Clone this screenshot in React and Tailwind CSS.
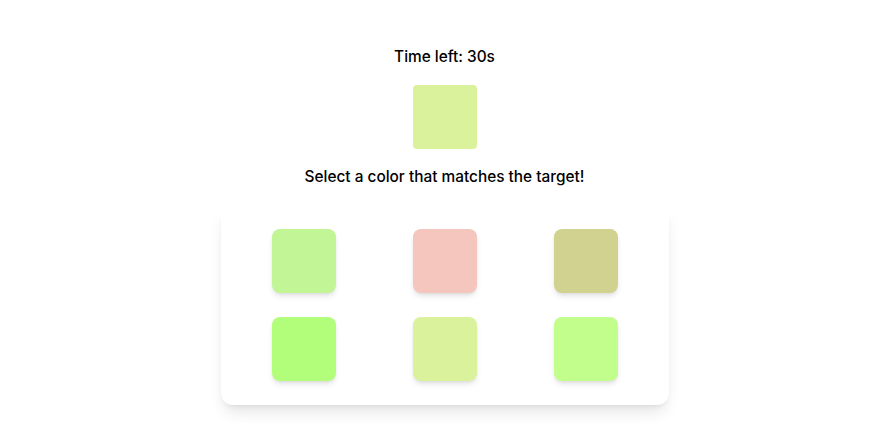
import React from 'react';

const options = ['#c2f595', '#f4c6bd', '#d2d290', '#b2fe7a', '#daf29c', '#c2fe8c'];

const App = () => {
  return (
    <div className="min-h-screen bg-white text-black flex flex-col items-center pt-[45px] font-['Inter',sans-serif]">
      <p className="text-[15.4px] leading-6 font-medium">Time left: 30s</p>
      <div className="w-16 h-16 rounded mt-4 bg-[#daf29c]" />
      <p className="text-[15.4px] leading-6 font-medium mt-4">Select a color that matches the target!</p>
      <div className="mt-4 w-[448px] bg-white rounded-xl shadow-lg px-[51px] py-6 grid grid-cols-[repeat(3,64px)] justify-between gap-y-6">
        {options.map((c, i) => (
          <div key={i} className="w-16 h-16 rounded-lg shadow-md cursor-pointer" style={{ backgroundColor: c }} />
        ))}
      </div>
    </div>
  );
};

export default App;
